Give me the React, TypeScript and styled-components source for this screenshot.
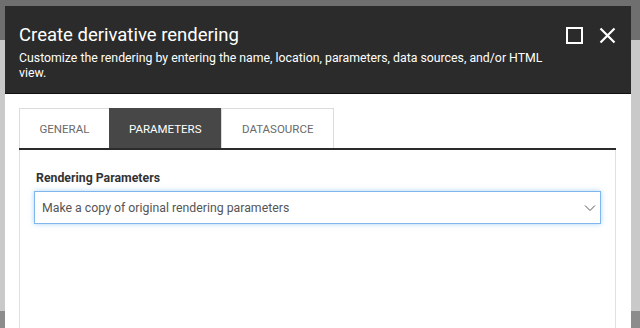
import React from "react";
import styled, { createGlobalStyle } from "styled-components";

const Global = createGlobalStyle`
  html, body { margin: 0; padding: 0; height: 100%; overflow: hidden; }
  body { font-family: Roboto, "Liberation Sans", sans-serif; }
  #root { height: 100%; }
`;

const Backdrop = styled.div`
  height: 328px;
  overflow: hidden;
  box-sizing: border-box;
  padding: 6px 9px 0 5px;
  background: linear-gradient(
    to bottom,
    #6f6f6f 0px,
    #6f6f6f 40px,
    #c9c9c9 40px,
    #c9c9c9 311px,
    #8c8c8c 311px
  );
`;

const Dialog = styled.div`
  width: 626px;
  height: 400px;
  background: #ffffff;
  display: flex;
  flex-direction: column;
`;

const Header = styled.div`
  background: #2b2b2b;
  color: #ffffff;
  height: 88px;
  box-sizing: border-box;
  padding: 16px 14px 0 14px;
  display: flex;
  justify-content: space-between;
  border-bottom: 1px solid #111;
`;

const HeaderText = styled.div`
  display: flex;
  flex-direction: column;
`;

const Title = styled.h1`
  margin: 0;
  font-size: 18.5px;
  font-weight: 400;
  line-height: 27px;
`;

const Subtitle = styled.p`
  margin: 2px 0 0 0;
  font-size: 12.3px;
  line-height: 15px;
  width: 530px;
`;

const Controls = styled.div`
  display: flex;
  gap: 16px;
  padding-top: 5px;
  padding-right: 1px;
`;

const IconButton = styled.button`
  background: none;
  border: 0;
  padding: 0;
  width: 17px;
  height: 17px;
  display: flex;
  cursor: pointer;
`;

const Body = styled.div`
  padding: 14px 15px 0 14px;
  display: flex;
  flex-direction: column;
  flex: 1;
`;

const TabRow = styled.div`
  display: flex;
  border-bottom: 2px solid #2b2b2b;
`;

const Tab = styled.button<{ $active?: boolean }>`
  font-family: Roboto, "Liberation Sans", sans-serif;
  font-size: 11.5px;
  height: 40px;
  padding: 0 ${(p) => (p.$active ? 20 : 19.5)}px;
  border: 1px solid #dcdcdc;
  border-bottom: 0;
  border-left-width: ${(p) => (p.$active ? 0 : 1)}px;
  border-right-width: ${(p) => (p.$active ? 0 : 1)}px;
  margin-right: ${(p) => (p.$active ? 0 : -1)}px;
  background: ${(p) => (p.$active ? "#474747" : "#ffffff")};
  color: ${(p) => (p.$active ? "#ffffff" : "#6a6a6a")};
  border-color: ${(p) => (p.$active ? "#474747" : "#dcdcdc")};
  text-transform: uppercase;
  cursor: pointer;
`;

const Panel = styled.div`
  flex: 1;
  border-left: 1px solid #e0e0e0;
  border-right: 1px solid #e0e0e0;
  padding: 20px 14px 0 14px;
`;

const Label = styled.label`
  display: block;
  font-size: 12.3px;
  font-weight: 700;
  color: #333;
  line-height: 16px;
  margin-left: 2px;
  margin-bottom: 5px;
`;

const SelectBox = styled.div`
  height: 33px;
  box-sizing: border-box;
  border: 1px solid #7fb6ec;
  box-shadow: 0 0 5px rgba(102, 175, 233, 0.55);
  display: flex;
  align-items: center;
  justify-content: space-between;
  padding: 0 4px 0 7px;
  font-size: 12.3px;
  color: #555;
`;

export default function App() {
  return (
    <>
      <Global />
      <Backdrop>
        <Dialog>
          <Header>
            <HeaderText>
              <Title>Create derivative rendering</Title>
              <Subtitle>
                Customize the rendering by entering the name, location, parameters, data sources, and/or HTML view.
              </Subtitle>
            </HeaderText>
            <Controls>
              <IconButton aria-label="Maximize">
                <svg width="17" height="17" viewBox="0 0 17 17">
                  <rect x="1" y="1" width="15" height="15" fill="none" stroke="#fff" strokeWidth="2" />
                </svg>
              </IconButton>
              <IconButton aria-label="Close">
                <svg width="17" height="17" viewBox="0 0 17 17">
                  <path d="M1.5 1.5 L15.5 15.5 M15.5 1.5 L1.5 15.5" stroke="#fff" strokeWidth="2.2" />
                </svg>
              </IconButton>
            </Controls>
          </Header>
          <Body>
            <TabRow>
              <Tab>General</Tab>
              <Tab $active>Parameters</Tab>
              <Tab>Datasource</Tab>
            </TabRow>
            <Panel>
              <Label>Rendering Parameters</Label>
              <SelectBox>
                <span>Make a copy of original rendering parameters</span>
                <svg width="12" height="8" viewBox="0 0 12 8">
                  <path d="M1 1.5 L6 6.5 L11 1.5" fill="none" stroke="#555" strokeWidth="1" />
                </svg>
              </SelectBox>
            </Panel>
          </Body>
        </Dialog>
      </Backdrop>
    </>
  );
}
